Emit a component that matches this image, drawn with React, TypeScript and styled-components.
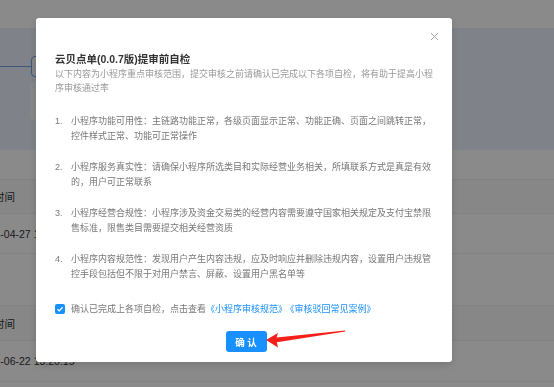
import styled, {createGlobalStyle} from "styled-components";

const GlobalStyle = createGlobalStyle`
    html, body {
        margin: 0;
        padding: 0;
        background: #fff;
    }
    body {
        font-family: "Liberation Sans", "Noto Sans CJK SC", sans-serif;
        color: #333;
    }
`

const Page = styled.div`
    width: 554px;
    height: 387px;
    overflow: hidden;
    background: #fff;
`

const Header = styled.div`
    height: 28px;
    background: #fff;
`

const Banner = styled.div`
    height: 122px;
    background: #ebf1fc;
    padding-top: 28px;
    box-sizing: border-box;
    display: flex;
    flex-direction: column;
    gap: 6px;
`

const StepRow = styled.div`
    display: flex;
    align-items: center;
    height: 21px;
`

const StepLine = styled.div`
    width: 31px;
    height: 1px;
    background: #6f9fe6;
`

const StepBox = styled.div`
    width: 80px;
    height: 21px;
    box-sizing: border-box;
    border: 1px solid #6f9fe6;
    border-radius: 4px;
    background: #f4f8ff;
`

const StepCard = styled.div`
    margin-left: 30px;
    width: 80px;
    height: 37px;
    border-radius: 4px;
    background: #f8fbff;
`

const Row = styled.div<{ h: number; head?: boolean }>`
    height: ${p => p.h}px;
    box-sizing: border-box;
    border-bottom: 1px solid #f0f0f0;
    background: ${p => p.head ? '#fafafa' : '#fff'};
    display: flex;
    align-items: center;
    font-size: 10.5px;
    color: #333;
    white-space: nowrap;
`

const Cell = styled.div<{ shift: number }>`
    margin-left: ${p => p.shift}px;
`

const Overlay = styled.div`
    position: fixed;
    inset: 0;
    background: rgba(0, 0, 0, 0.46);
    padding: 18px 0 0 36px;
    box-sizing: border-box;
`

const Modal = styled.div`
    position: relative;
    width: 416px;
    height: 344px;
    box-sizing: border-box;
    padding: 34px 17px 10px 19px;
    background: #fff;
    border-radius: 3px;
    box-shadow: 0 3px 8px rgba(0, 0, 0, 0.15);
    display: flex;
    flex-direction: column;
`

const Close = styled.svg`
    position: absolute;
    top: 14px;
    right: 13px;
`

const Title = styled.div`
    font-size: 10.5px;
    line-height: 14px;
    font-weight: 700;
    color: #333;
`

const Desc = styled.div`
    margin-top: 2px;
    font-size: 9px;
    line-height: 13.5px;
    color: #999;
`

const List = styled.div`
    margin-top: 19px;
    width: 378px;
    display: flex;
    flex-direction: column;
    gap: 17px;
`

const Item = styled.div`
    display: grid;
    grid-template-columns: 16px 362px;
    font-size: 9px;
    line-height: 14.5px;
    color: #777;
`

const Check = styled.label`
    margin-top: 21px;
    display: flex;
    align-items: center;
    gap: 6px;
    font-size: 9px;
    line-height: 14px;
    color: #777;
    white-space: nowrap;
`

const Box = styled.span`
    width: 10px;
    height: 10px;
    border-radius: 2px;
    background: #1890ff;
    display: flex;
    align-items: center;
    justify-content: center;
`

const Link = styled.a`
    color: #1890ff;
    text-decoration: none;
    & + & {
        margin-left: 3px;
    }
`

const Footer = styled.div`
    margin-top: 15px;
    display: flex;
    justify-content: center;
`

const Button = styled.button`
    width: 41px;
    height: 21px;
    border: none;
    border-radius: 3px;
    background: #1890ff;
    color: #fff;
    font-family: "Liberation Sans", "Noto Sans CJK SC", sans-serif;
    font-size: 9.5px;
    font-weight: 700;
    padding: 0;
    margin-left: 2px;
    cursor: pointer;
`

const Arrow = styled.svg`
    position: absolute;
    left: 228px;
    top: 310px;
`

const items = [
    '小程序功能可用性：主链路功能正常，各级页面显示正常、功能正确、页面之间跳转正常，控件样式正常、功能可正常操作',
    '小程序服务真实性：请确保小程序所选类目和实际经营业务相关，所填联系方式是真是有效的，用户可正常联系',
    '小程序经营合规性：小程序涉及资金交易类的经营内容需要遵守国家相关规定及支付宝禁限售标准，限售类目需要提交相关经营资质',
    '小程序内容规范性：发现用户产生内容违规，应及时响应并删除违规内容，设置用户违规管控手段包括但不限于对用户禁言、屏蔽、设置用户黑名单等',
]

export default function App() {
    return (
        <>
            <GlobalStyle/>
            <Page>
                <Header/>
                <Banner>
                    <StepRow>
                        <StepLine/>
                        <StepBox/>
                    </StepRow>
                    <StepCard/>
                </Banner>
                <Row h={30}/>
                <Row h={34} head><Cell shift={-6}>时间</Cell></Row>
                <Row h={40}><Cell shift={-23}>2021-04-27 10:32:08</Cell></Row>
                <Row h={52}/>
                <Row h={35} head><Cell shift={-6}>时间</Cell></Row>
                <Row h={41}><Cell shift={-23}>2021-06-22 13:20:15</Cell></Row>
                <Row h={40}/>
            </Page>
            <Overlay>
                <Modal>
                    <Close width="9" height="9" viewBox="0 0 9 9">
                        <path d="M1 1L8 8M8 1L1 8" stroke="#999" strokeWidth="0.9" fill="none"/>
                    </Close>
                    <Title>云贝点单(0.0.7版)提审前自检</Title>
                    <Desc>以下内容为小程序重点审核范围，提交审核之前请确认已完成以下各项自检，将有助于提高小程序审核通过率</Desc>
                    <List>
                        {items.map((t, i) => (
                            <Item key={i}>
                                <span>{i + 1}.</span>
                                <span>{t}</span>
                            </Item>
                        ))}
                    </List>
                    <Check>
                        <Box>
                            <svg width="8" height="8" viewBox="0 0 8 8">
                                <path d="M1.5 4.2L3.3 5.9L6.6 2.3" stroke="#fff" strokeWidth="1.3" fill="none"/>
                            </svg>
                        </Box>
                        <span>
                            确认已完成上各项自检，点击查看<Link>《小程序审核规范》</Link><Link>《审核驳回常见案例》</Link>
                        </span>
                    </Check>
                    <Footer>
                        <Button>确 认</Button>
                    </Footer>
                    <Arrow width="84" height="22" viewBox="0 0 84 22">
                        <polygon
                            points="2,12 14,5 12.5,9.6 81,2.4 81.4,3.6 12.8,14.2 14,19.5"
                            fill="#f5201a"
                        />
                    </Arrow>
                </Modal>
            </Overlay>
        </>
    )
}
